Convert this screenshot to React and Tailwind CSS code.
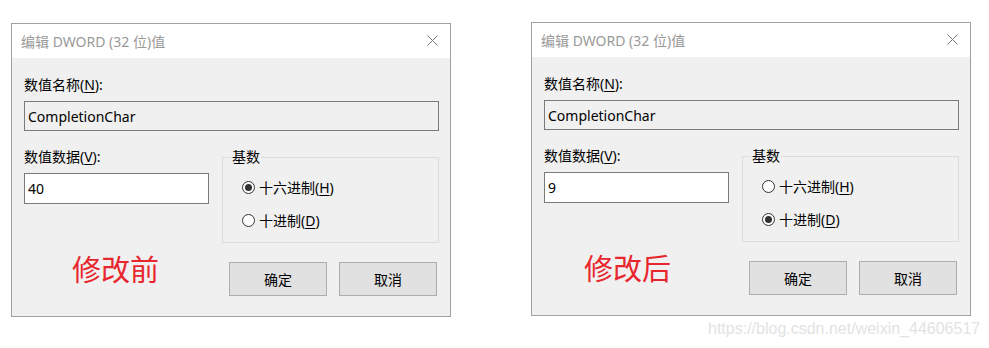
const font = { fontFamily: '"Noto Sans", "Noto Sans CJK SC", sans-serif' };

const Radio = ({ checked, children }) => (
  <label className="flex items-center h-5 gap-[4px] text-[14px] text-black">
    <span className="w-[13px] h-[13px] rounded-full border border-[#333] bg-white flex items-center justify-center">
      {checked && <span className="w-[7px] h-[7px] rounded-full bg-[#333]" />}
    </span>
    <span>{children}</span>
  </label>
);

const Dialog = ({ value, hex, note, noteIndent, className }) => (
  <div className={`w-[440px] h-[294px] border border-[#a0a0a0] bg-[#f0f0f0] flex flex-col ${className}`}>
    {/* title bar */}
    <div className="h-[34px] bg-white flex items-center justify-between pl-[9px] pr-[12px]">
      <span className="text-[14px] text-[#999999]">编辑 DWORD (32 位)值</span>
      <svg width="11" height="11" viewBox="0 0 11 11" className="-mt-[2px]">
        <path d="M0.5 0.5 L10.5 10.5 M10.5 0.5 L0.5 10.5" stroke="#777" strokeWidth="1" fill="none" />
      </svg>
    </div>

    <div className="flex flex-col pl-[12px] pt-[17px] text-[14px] text-black">
      <div className="h-5 leading-5">
        数值名称(<span className="underline underline-offset-2">N</span>):
      </div>
      <div className="mt-[6px] w-[415px] h-[30px] border border-[#7a7a7a] bg-[#f0f0f0] flex items-center pl-[3px]">
        CompletionChar
      </div>

      <div className="flex mt-[16px]">
        {/* left column */}
        <div className="w-[185px] flex flex-col">
          <div className="h-5 leading-5">
            数值数据(<span className="underline underline-offset-2">V</span>):
          </div>
          <div className="mt-[6px] h-[31px] border border-[#7a7a7a] bg-white flex items-center pl-[3px]">
            {value}
          </div>
          <div className={`mt-[46px] h-10 leading-10 text-[29px] text-[#e8262d] ${noteIndent}`}>{note}</div>
        </div>

        {/* right column */}
        <div className="ml-[13px] w-[217px] flex flex-col">
          <fieldset className="border border-[#dcdcdc] h-[96px]">
            <legend className="ml-[8px] px-[1px] h-5 leading-5">基数</legend>
            <div className="pl-[19px] pt-[10px] flex flex-col gap-[13px]">
              <Radio checked={hex}>
                十六进制(<span className="underline underline-offset-2">H</span>)
              </Radio>
              <Radio checked={!hex}>
                十进制(<span className="underline underline-offset-2">D</span>)
              </Radio>
            </div>
          </fieldset>
          <div className="flex gap-[12px] pl-[7px] mt-[19px]">
            <button className="w-[98px] h-[34px] bg-[#e1e1e1] border border-[#adadad]">确定</button>
            <button className="w-[98px] h-[34px] bg-[#e1e1e1] border border-[#adadad]">取消</button>
          </div>
        </div>
      </div>
    </div>
  </div>
);

export default function App() {
  return (
    <div className="relative w-[989px] h-[348px] bg-white flex items-start pl-[11px] pt-[22px] gap-[80px]" style={font}>
      <Dialog value="40" hex note="修改前" noteIndent="ml-[48px]" className="mt-px" />
      <Dialog value="9" hex={false} note="修改后" noteIndent="ml-[40px]" />
      {/* csdn watermark */}
      <div
        className="absolute left-[708px] top-[319px] text-[16px] leading-5 text-[#e3e3e3]"
        style={{ fontFamily: '"Liberation Sans", Arial, sans-serif' }}
      >
        https://blog.csdn.net/weixin_44606517
      </div>
    </div>
  );
}
